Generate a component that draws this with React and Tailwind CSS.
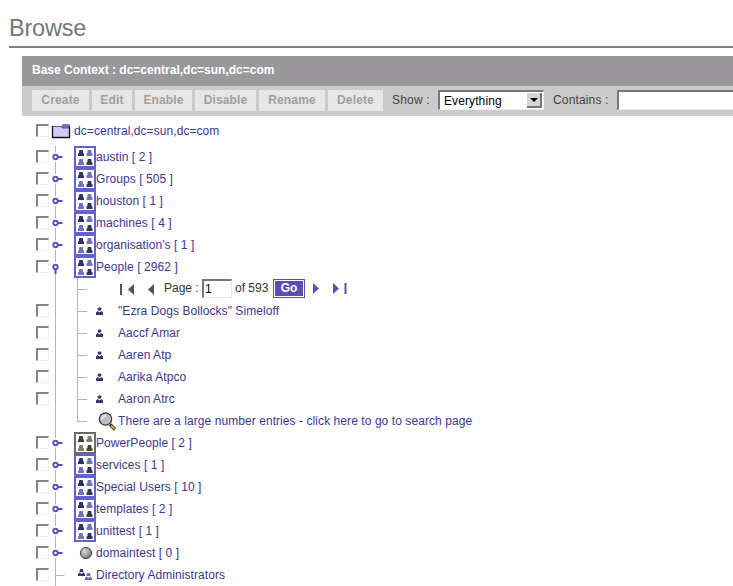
const BLUE = '#5a50b8';

const person = (x, y, fill) => (
  <path
    key={`${x}-${y}`}
    fill={fill}
    d={`M${x + 1.5} ${y}h3l.5 1v1.500l.3 .7l.7 .3v2.500h-6v-2.500l.7-.3l.3-.7v-1.500z`}
  />
);

function GroupIcon({ gray }) {
  const edge = gray ? '#6b6b66' : '#6262cc';
  const dark = gray ? '#42423e' : '#34315f';
  const light = gray ? '#7c7c78' : '#7270c0';
  return (
    <svg className="h-[22px] w-[22px] shrink-0" viewBox="0 0 22 22">
      <rect width="22" height="22" fill={edge} />
      <rect x="2" y="2" width="18" height="18" fill="#fff" />
      {person(4, 4, dark)}
      {person(12.5, 4, light)}
      {person(4, 13, light)}
      {person(12.5, 13, dark)}
    </svg>
  );
}

function UserIcon() {
  return (
    <svg className="h-[22px] w-[22px] shrink-0" viewBox="0 0 22 22">
      <path d="M2.500 7.500h2l.8 1v1.200l-1 1h-1.600l-1-1v-1.200z" fill="#38336e" />
      <path d="M0 15v-2.500l1.500-1.500l2 1.500l2-1.500l1.500 1.500v2.500z" fill="#38336e" />
    </svg>
  );
}

function SearchIcon() {
  return (
    <svg className="h-[22px] w-[22px] shrink-0" viewBox="0 0 22 22">
      <path d="M14 14.500l5 5" stroke="#2b2415" strokeWidth="3.200" />
      <path d="M15 15.500l3.500 3.500" stroke="#d8aa48" strokeWidth="1.800" />
      <circle cx="9.500" cy="9" r="6.200" fill="#bcbcc8" stroke="#333" strokeWidth="1.200" />
      <path d="M6 10a3.500 3.500 0 0 1 4.500-4" stroke="#e4e4ec" strokeWidth="2" fill="none" />
    </svg>
  );
}

function BallIcon() {
  return (
    <svg className="h-[22px] w-[22px] shrink-0" viewBox="0 0 22 22">
      <defs>
        <radialGradient id="ball" cx="38%" cy="35%" r="65%">
          <stop offset="0" stopColor="#d4d4d0" />
          <stop offset="0.6" stopColor="#a4a4a0" />
          <stop offset="1" stopColor="#707070" />
        </radialGradient>
      </defs>
      <circle cx="12" cy="11" r="5.600" fill="url(#ball)" stroke="#484848" strokeWidth="1" />
    </svg>
  );
}

function AdminsIcon() {
  return (
    <svg className="h-[22px] w-[22px] shrink-0" viewBox="0 0 22 22">
      <path d="M6.500 5h2l.8 1v1.200l-1 1h-1.600l-1-1v-1.200z" fill="#38336e" />
      <path d="M4 12v-2l1.500-1.500l2 1.500l2-1.500l1.500 1.500v2z" fill="#38336e" />
      <path d="M13.500 9h2l.8 1v1.200l-1 1h-1.600l-1-1v-1.200z" fill="#6a66b8" />
      <path d="M11 16v-2l1.500-1.500l2 1.500l2-1.500l1.500 1.500v2z" fill="#6a66b8" />
    </svg>
  );
}

function FolderIcon() {
  return (
    <svg className="h-[22px] w-[21px] shrink-0" viewBox="0 0 21 22">
      <path d="M1 6h9l1 2h8v10h-18z" fill="#ccccff" />
      <path d="M10 6l2-2h6l1 1v3h-8z" fill="#7472b0" />
      <path d="M1 6.500h9l1.500 1.500h7" fill="none" stroke="#55537c" strokeWidth="1" />
      <path d="M1.500 6v11.500h17v-11" fill="none" stroke="#111" strokeWidth="1.300" />
    </svg>
  );
}

function Handle({ kind }) {
  return (
    <svg className="h-[22px] w-[25px] shrink-0" viewBox="0 0 25 22" fill="none">
      <path d="M6.500 0v22" stroke="#b4b4b4" />
      {kind === 'leaf' && <path d="M6.500 11.500h9" stroke="#b4b4b4" />}
      {(kind === 'closed' || kind === 'open') && (
        <>
          <path d="M6.500 6v10" stroke="#fff" strokeWidth="3" />
          <path d={kind === 'closed' ? 'M9 11h4.500' : 'M6.500 13v5'} stroke={BLUE} strokeWidth="2" />
          <circle cx="6.500" cy="11" r="2.200" fill="#fff" stroke={BLUE} strokeWidth="1.900" />
        </>
      )}
    </svg>
  );
}

function Branch({ last }) {
  return (
    <svg className="h-[22px] w-[22px] shrink-0" viewBox="0 0 22 22" fill="none">
      <path d={last ? 'M3.500 0v11.500h9.500' : 'M3.500 0v22M3.500 11.500h9.500'} stroke="#b4b4b4" />
    </svg>
  );
}

function Checkbox() {
  return (
    <span className="mb-px h-[13px] w-[13px] shrink-0 border-t-2 border-l-2 border-r border-b border-t-[#858585] border-l-[#858585] border-r-[#f0f0f0] border-b-[#f0f0f0] bg-white" />
  );
}

function Row({ handle, noCheck, children }) {
  return (
    <div className="flex h-[22px] items-center pl-9">
      {noCheck ? <span className="w-[13px] shrink-0" /> : <Checkbox />}
      <Handle kind={handle} />
      {children}
    </div>
  );
}

function Label({ children }) {
  return <span className="whitespace-pre tracking-[0.07px] text-[#40369a]">{children}</span>;
}

const top = ['austin [ 2 ]', 'Groups [ 505 ]', 'houston [ 1 ]', 'machines [ 4 ]', "organisation's [ 1 ]"];
const people = ['"Ezra Dogs Bollocks" Simeloff', 'Aaccf Amar', 'Aaren Atp', 'Aarika Atpco', 'Aaron Atrc'];
const bottom = ['services [ 1 ]', 'Special Users [ 10 ]', 'templates [ 2 ]', 'unittest [ 1 ]'];

const buttons = [
  ['Create', 'w-[57px]'],
  ['Edit', 'w-10'],
  ['Enable', 'w-[57px]'],
  ['Disable', 'w-[61px]'],
  ['Rename', 'w-[66px]'],
  ['Delete', 'w-[55px]'],
];

function GroupRow({ text, gray, handle = 'closed' }) {
  return (
    <Row handle={handle}>
      <GroupIcon gray={gray} />
      <Label>{text}</Label>
    </Row>
  );
}

function Pager() {
  return (
    <div className="flex h-[22px] items-center whitespace-pre pb-[2px] text-[#333]">
      <svg className="h-[22px] w-[68px] shrink-0" viewBox="0 0 68 22" fill="#555">
        <path d="M24 7h2v11h-2zM38 7v11l-6-5.500zM58 7v11l-6-5.500z" />
      </svg>
      <span className="w-[38px]">Page :</span>
      <span className="h-[19px] w-[30px] border-t-2 border-l-2 border-r border-b border-t-[#777] border-l-[#777] border-r-[#e6e6e6] border-b-[#e6e6e6] bg-white pl-px leading-[16px] text-black">
        1
      </span>
      <span className="ml-[3px] w-[38px]">of 593</span>
      <span className="flex h-[19px] w-8 items-center justify-center border border-[#5a50b8] bg-white p-px">
        <span className="h-full w-full bg-[#5a4db8] text-center font-bold leading-[15px] text-white">Go</span>
      </span>
      <svg className="h-[22px] w-[50px] shrink-0" viewBox="0 0 50 22" fill={BLUE}>
        <path d="M8 6v11l6-5.500zM28 6v11l6-5.500zM39.500 6h2v11h-2z" />
      </svg>
    </div>
  );
}

export default function App() {
  return (
    <div className="h-[586px] w-[733px] overflow-hidden bg-[#fefefe] font-['Liberation_Sans',Arial,sans-serif] text-[12px]">
      <h1 className="ml-[9px] h-12 border-b-2 border-[#808080] pt-[14px] text-[23.5px] leading-[28px] tracking-[-0.2px] text-[#777]">
        Browse
      </h1>
      <div className="mt-2 ml-[22px]">
        <div className="h-[30px] bg-[#9b989b] pl-[10px] font-bold leading-[28px] text-white">
          Base Context : dc=central,dc=sun,dc=com
        </div>
        <div className="flex h-[30px] items-start bg-[#cbcbcb] pt-1 pl-[10px]">
          <div className="flex gap-[3px]">
            {buttons.map(([name, width]) => (
              <span
                key={name}
                className={`h-[21px] bg-[#e6e6e6] text-center font-bold leading-[21px] tracking-[0.15px] text-[#a0a0a0] ${width}`}
              >
                {name}
              </span>
            ))}
          </div>
          <span className="ml-[9px] w-[46px] whitespace-nowrap leading-[21px] tracking-[0.2px] text-[#444]">Show :</span>
          <div className="flex h-5 w-[106px] items-center border-t-2 border-l-2 border-r border-b border-t-[#777] border-l-[#777] border-r-[#eee] border-b-[#eee] bg-white pl-1 text-black">
            <span className="flex-1 tracking-[0.1px]">Everything</span>
            <span className="mr-px flex h-[15px] w-[15px] items-center justify-center border-r-2 border-b-2 border-[#777] bg-[#d6d6d6]">
              <svg className="h-1 w-2" viewBox="0 0 8 4">
                <path d="M0 0h8L4 4z" />
              </svg>
            </span>
          </div>
          <span className="ml-[9px] w-16 whitespace-nowrap leading-[21px] tracking-[0.15px] text-[#444]">Contains :</span>
          <span className="h-5 flex-1 border-t-2 border-l-2 border-b border-t-[#777] border-l-[#777] border-b-[#eee] bg-white" />
        </div>
      </div>
      <div className="mt-1">
        <div className="mb-1 flex h-[22px] items-center pl-9">
          <Checkbox />
          <span className="w-[2px]" />
          <FolderIcon />
          <span className="w-[2px]" />
          <Label>dc=central,dc=sun,dc=com</Label>
        </div>
        {top.map((t) => (
          <GroupRow key={t} text={t} />
        ))}
        <GroupRow text="People [ 2962 ]" handle="open" />
        <Row noCheck>
          <Branch />
          <Pager />
        </Row>
        {people.map((name) => (
          <Row key={name}>
            <Branch />
            <UserIcon />
            <Label>{name}</Label>
          </Row>
        ))}
        <Row noCheck>
          <Branch last />
          <SearchIcon />
          <Label>There are a large number entries - click here to go to search page</Label>
        </Row>
        <GroupRow text="PowerPeople [ 2 ]" gray />
        {bottom.map((t) => (
          <GroupRow key={t} text={t} />
        ))}
        <Row handle="closed">
          <BallIcon />
          <Label>domaintest [ 0 ]</Label>
        </Row>
        <Row handle="leaf">
          <AdminsIcon />
          <Label>Directory Administrators</Label>
        </Row>
      </div>
    </div>
  );
}
